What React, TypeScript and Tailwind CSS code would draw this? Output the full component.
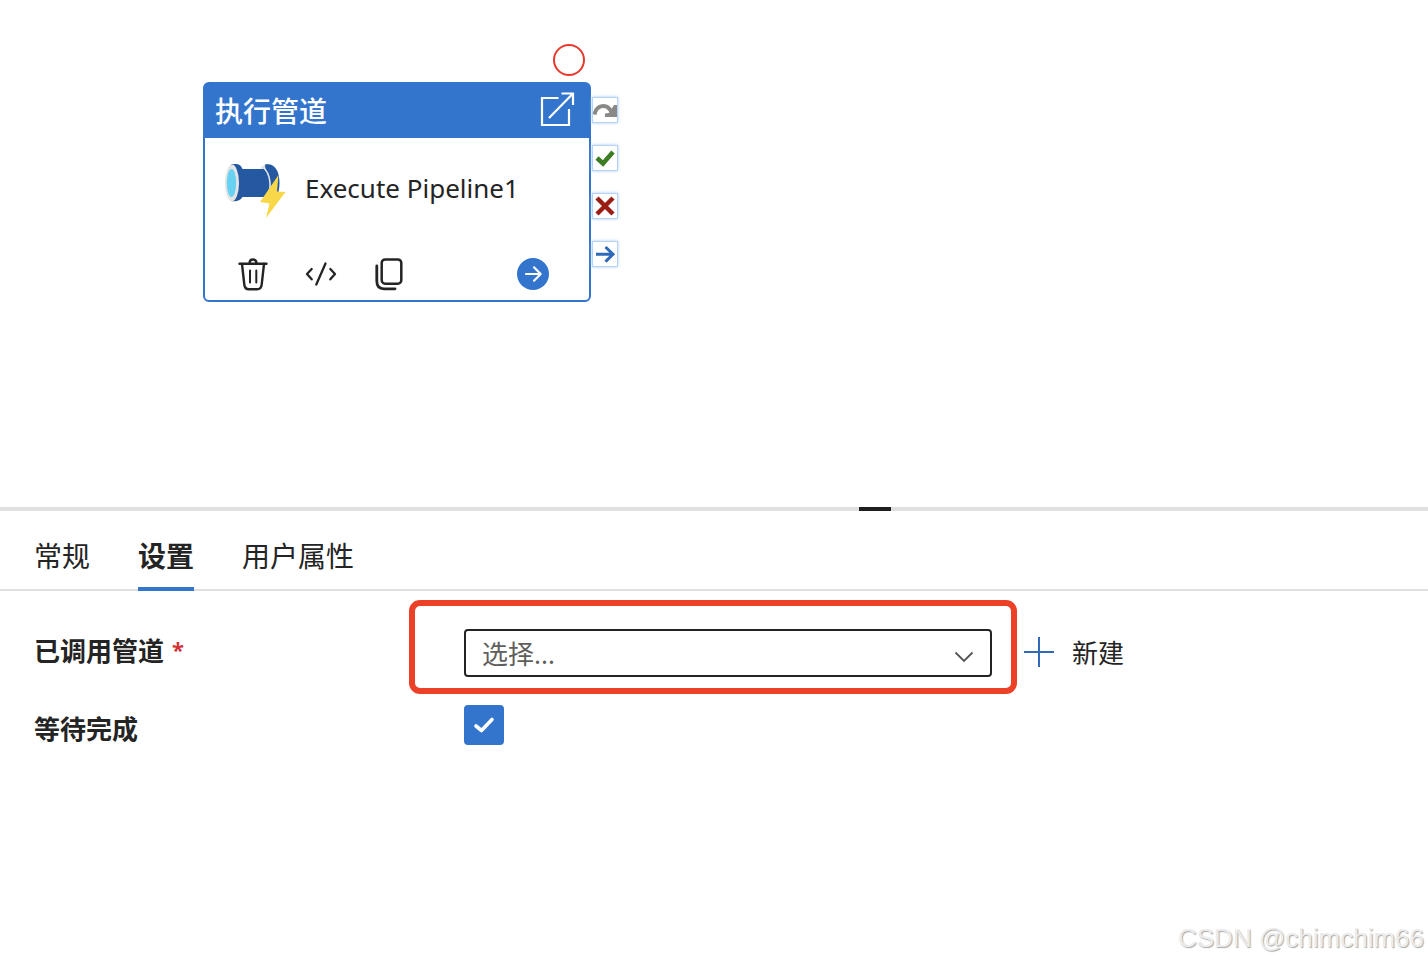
import { useState, type ReactNode } from "react";

function PipelineIcon() {
  return (
    <svg className="h-[56px] w-[64px] shrink-0" viewBox="0 0 64 56" aria-hidden="true">
      <path d="M38 5.500C40 2.500 46 1.500 50 3L53 36C50 39 44 39 41 36Z" fill="#dfdfdf" />
      <path d="M42 2.500C51 1 56.500 8 56.500 21C56.500 34 51 40 46 38.500Z" fill="#2458a0" />
      <path d="M13 7H41C48 14 48 28 42 35H13Z" fill="#2458a0" />
      <path d="M40 5C48 12 49 27 44 34" fill="none" stroke="#e0e5ec" strokeWidth="1.600" />
      <path d="M8 2.500C15 1 18 3 19.500 7V35C17 39 13 40 8 39Z" fill="#2458a0" />
      <ellipse cx="9" cy="21" rx="7" ry="18.500" fill="#e4e4e4" />
      <ellipse cx="8.500" cy="21" rx="4.700" ry="14" fill="#69d2f3" />
      <path d="M55.500 13L37 40L46.500 41.500L43 56L62.500 30L54 29.500Z" fill="#f8d748" />
    </svg>
  );
}

function OpenIcon() {
  return (
    <svg className="size-9" viewBox="0 0 36 36" fill="none" stroke="#fff" strokeWidth="2.200" aria-hidden="true">
      <path d="M19.500 7H3V34H30V18" />
      <path d="M10 27L33.500 3M22.500 2.500H34V14" />
    </svg>
  );
}

function TrashIcon() {
  return (
    <svg className="size-9" viewBox="0 0 36 36" fill="none" stroke="#242424" strokeWidth="2.400" strokeLinecap="round" strokeLinejoin="round" aria-hidden="true">
      <path d="M4.500 7.800H31.500M14.500 7.500C14.500 2.200 21.500 2.200 21.500 7.500" />
      <path d="M7 8L9.300 28.500C9.600 31.800 11 33.300 14 33.300H22C25 33.300 26.400 31.800 26.700 28.500L29 8" />
      <path d="M15 14.500V26.500M21.300 14.500V26.500" strokeWidth="2" />
    </svg>
  );
}

function CodeIcon() {
  return (
    <svg className="size-9" viewBox="0 0 36 36" fill="none" stroke="#242424" strokeWidth="2.300" strokeLinecap="round" strokeLinejoin="round" aria-hidden="true">
      <path d="M8.700 13L4 18L8.700 23.300M27.300 13L32 18L27.300 23.300M22.500 7.500L13.300 28.500" />
    </svg>
  );
}

function CopyIcon() {
  return (
    <svg className="size-9" viewBox="0 0 36 36" fill="none" stroke="#242424" aria-hidden="true">
      <rect x="10.700" y="3.400" width="19.600" height="24.300" rx="3.500" strokeWidth="2.500" />
      <path d="M5.800 10V25C5.800 30.500 8.500 32.800 13 32.800H24" strokeWidth="2.800" strokeLinecap="round" />
    </svg>
  );
}

function Port({ label, children }: { label: string; children: ReactNode }) {
  return (
    <button type="button" aria-label={label} className="size-[26px] border border-[#b5d2f7] bg-white shadow-[0_0_3px_#a9cbf5]">
      <svg className="size-6" viewBox="0 0 24 24" fill="none" aria-hidden="true">
        {children}
      </svg>
    </button>
  );
}

function PipelineNode() {
  return (
    <div className="absolute top-[82px] left-[203px] w-[388px]">
      <span className="absolute -top-[38px] right-[6px] size-8 rounded-full border-2 border-[#e8392b]" />
      <article className="rounded-md border-2 border-[#3375cd] bg-white">
        <header className="flex h-[54px] items-center justify-between bg-[#3375cd] pr-3.5 pb-1 pl-2.5 text-white">
          <h2 className="pt-1 text-[28px] leading-9 font-medium">执行管道</h2>
          <button type="button" aria-label="打开">
            <OpenIcon />
          </button>
        </header>
        <div className="flex items-center gap-[18px] px-[18px] pt-6">
          <PipelineIcon />
          <span className="pb-1 text-[26px] leading-9">Execute Pipeline1</span>
        </div>
        <div className="flex items-center pt-[38px] pr-10 pb-2 pl-[30px]">
          <div className="flex flex-1 gap-8">
            <button type="button" aria-label="删除"><TrashIcon /></button>
            <button type="button" aria-label="代码"><CodeIcon /></button>
            <button type="button" aria-label="复制"><CopyIcon /></button>
          </div>
          <button type="button" aria-label="添加输出" className="size-8 rounded-full bg-[#3375cd]">
            <svg className="size-8" viewBox="0 0 32 32" fill="none" stroke="#fff" strokeWidth="2.200" strokeLinecap="round" strokeLinejoin="round" aria-hidden="true">
              <path d="M9 16H23.500M17 9.300L23.700 16L17 22.700" />
            </svg>
          </button>
        </div>
      </article>
      <div className="absolute top-[15px] left-full ml-px flex flex-col gap-[22px]">
        <Port label="跳过时">
          <path d="M1.500 16.500C3.500 6.500 14 5 18.500 14" stroke="#8b8987" strokeWidth="4" />
          <path d="M24 7V19H12V15.500L16 15L21 7Z" fill="#8b8987" />
        </Port>
        <Port label="成功时">
          <path d="M4 12L10 17.500L20 6" stroke="#3a7d22" strokeWidth="4.500" />
        </Port>
        <Port label="失败时">
          <path d="M4 4L20 20M20 4L4 20" stroke="#9b1c13" strokeWidth="4.500" />
        </Port>
        <Port label="完成时">
          <path d="M3 12.300H20M12.500 5L20 12.300L12.500 19.600" stroke="#2f6ab8" strokeWidth="3" />
        </Port>
      </div>
    </div>
  );
}

const tabs = ["常规", "设置", "用户属性"];

export default function App() {
  const [tab, setTab] = useState("设置");
  const [wait, setWait] = useState(true);

  return (
    <div className="relative flex min-h-screen flex-col bg-white font-['Noto_Sans','Noto_Sans_CJK_SC',sans-serif] text-[#242424]">
      <main className="relative h-[507px]">
        <PipelineNode />
      </main>
      <section>
        <div className="flex h-1 bg-[#e0e0e0] pl-[322px]">
          <div className="mx-auto h-1 w-8 bg-[#1f1f1f]" />
        </div>
        <div role="tablist" className="flex h-20 gap-12 border-b-2 border-[#e0e0e0] pl-[34px]">
          {tabs.map((name) => (
            <button
              key={name}
              type="button"
              role="tab"
              aria-selected={tab === name}
              onClick={() => setTab(name)}
              className={
                tab === name
                  ? "-mb-0.5 border-b-4 border-[#3375cd] pt-3.5 text-[28px] leading-9 font-bold"
                  : "-mb-0.5 border-b-4 border-transparent pt-3.5 text-[28px] leading-9"
              }
            >
              {name}
            </button>
          ))}
        </div>
        <form className="flex flex-col gap-7 pt-[38px] pl-[34px] text-[26px] leading-9">
          <div className="flex items-center">
            <label htmlFor="pipeline" className="flex w-[430px] gap-2 pb-1 font-bold">
              已调用管道
              <span className="text-[22px] leading-8 text-[#d13438]">*</span>
            </label>
            <div className="relative w-[528px]">
              <select
                id="pipeline"
                className="h-12 w-full appearance-none rounded border-2 border-[#242424] bg-white pt-0.5 pl-4 text-[#605e5c]"
              >
                <option>选择...</option>
              </select>
              <svg className="pointer-events-none absolute top-4 right-4 size-6" viewBox="0 0 24 24" fill="none" stroke="#555" strokeWidth="1.800" aria-hidden="true">
                <path d="M3.500 7.500L12 16L20.500 7.500" />
              </svg>
              <div className="pointer-events-none absolute -top-[29px] -right-[25px] -bottom-[17px] -left-[55px] rounded-[11px] border-6 border-[#ec4127]" />
            </div>
            <button type="button" className="ml-8 flex items-center gap-[18px]">
              <svg className="mb-0.5 size-[30px]" viewBox="0 0 30 30" stroke="#2f6ab8" strokeWidth="2" aria-hidden="true">
                <path d="M15 0V30M0 15H30" />
              </svg>
              <span>新建</span>
            </button>
          </div>
          <div className="flex items-center">
            <label htmlFor="wait" className="-mb-1 w-[430px] pt-1 font-bold">等待完成</label>
            <div className="relative size-10">
              <input
                id="wait"
                type="checkbox"
                checked={wait}
                onChange={(e) => setWait(e.target.checked)}
                className="block size-10 appearance-none rounded border-2 border-[#3375cd] checked:bg-[#3375cd]"
              />
              {wait && (
                <svg className="pointer-events-none absolute inset-0 size-10" viewBox="0 0 40 40" fill="none" stroke="#fff" strokeWidth="3.600" strokeLinecap="round" strokeLinejoin="round" aria-hidden="true">
                  <path d="M12 21L17.500 25.500L28 14.500" />
                </svg>
              )}
            </div>
          </div>
        </form>
      </section>
      <p className="absolute right-1 bottom-2 font-['Liberation_Sans',sans-serif] text-[26px] leading-9 text-[#ececec] [text-shadow:1px_1px_1px_#a8a8a8]">
        CSDN @chimchim66
      </p>
    </div>
  );
}
